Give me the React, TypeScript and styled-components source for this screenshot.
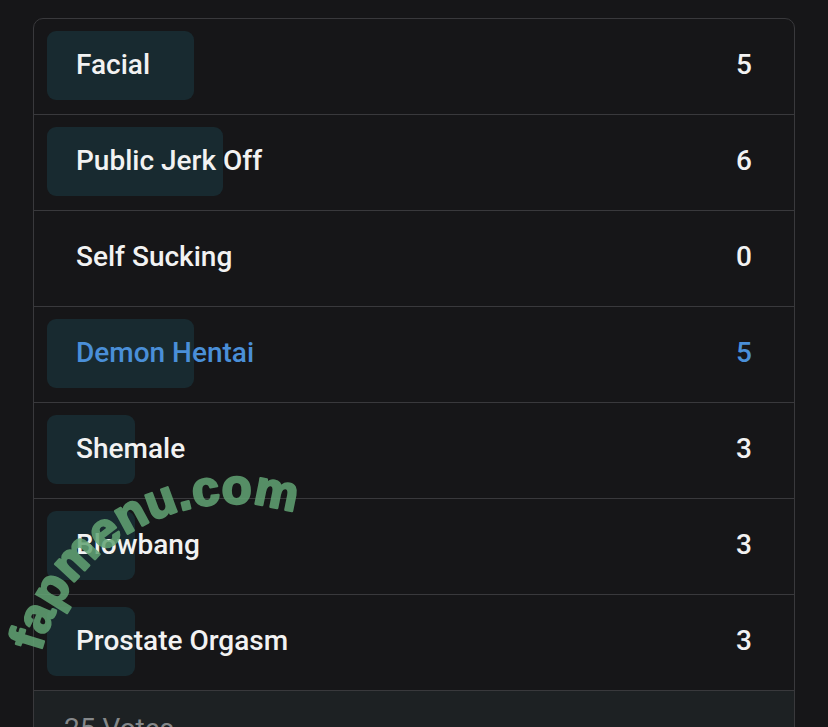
import React from 'react';
import styled, { createGlobalStyle } from 'styled-components';

const GlobalStyle = createGlobalStyle`
  body {
    margin: 0;
    background: #161618;
    font-family: Roboto, 'Liberation Sans', sans-serif;
  }
`;

const Page = styled.div`
  position: relative;
  height: 727px;
  overflow: hidden;
  padding: 18px 33px 0 33px;
  box-sizing: border-box;
`;

const Card = styled.div`
  border: 1px solid #39393c;
  border-radius: 10px;
  overflow: hidden;
  background: #161618;
`;

const Row = styled.div`
  display: grid;
  height: 96px;
  padding: 12px 13px 14px;
  box-sizing: border-box;
  border-bottom: 1px solid #39393c;
`;

const Bar = styled.div`
  grid-area: 1 / 1;
  border-radius: 9px;
  background: #182a30;
  height: 100%;
`;

const Content = styled.div<{ $active?: boolean }>`
  grid-area: 1 / 1;
  display: flex;
  align-items: center;
  justify-content: space-between;
  padding: 0 29px 3px 29px;
  font-size: 28px;
  font-weight: 500;
  color: ${(p) => (p.$active ? '#4a8fd8' : '#f2f2f2')};
`;

const Footer = styled.div`
  background: #1d2123;
  padding: 21px 30px;
  font-size: 28px;
  color: #85888a;
`;

const Watermark = styled.svg`
  position: absolute;
  left: 0;
  top: 0;
  pointer-events: none;
`;

const options = [
  { label: 'Facial', votes: 5 },
  { label: 'Public Jerk Off', votes: 6 },
  { label: 'Self Sucking', votes: 0 },
  { label: 'Demon Hentai', votes: 5, active: true },
  { label: 'Shemale', votes: 3 },
  { label: 'Blowbang', votes: 3 },
  { label: 'Prostate Orgasm', votes: 3 },
];

export default function App() {
  const total = options.reduce((s, o) => s + o.votes, 0);
  return (
    <Page>
      <GlobalStyle />
      <Card>
        {options.map((o) => (
          <Row key={o.label}>
            <Bar style={{ width: `${(o.votes / total) * 100}%`, opacity: o.votes ? 1 : 0 }} />
            <Content $active={o.active}>
              <span>{o.label}</span>
              <span>{o.votes}</span>
            </Content>
          </Row>
        ))}
        <Footer>{total} Votes</Footer>
      </Card>
      <Watermark width="828" height="727" viewBox="0 0 828 727">
        <defs>
          <path id="wm-arc" d="M 40.8 652.2 A 200 200 0 0 1 304 516" />
        </defs>
        <text
          fill="#62a474"
          stroke="#62a474"
          strokeWidth="2.5"
          strokeLinejoin="round"
          opacity="0.85"
          fontFamily="'Liberation Sans', Arial, sans-serif"
          fontWeight="700"
          fontSize="49"
          letterSpacing="0.5"
        >
          <textPath href="#wm-arc">fapmenu.com</textPath>
        </text>
      </Watermark>
    </Page>
  );
}
